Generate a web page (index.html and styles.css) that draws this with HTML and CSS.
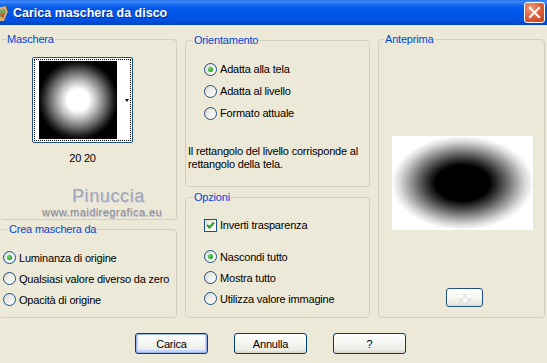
FILE: index.html
```html
<!DOCTYPE html>
<html lang="it">
<head>
<meta charset="utf-8">
<title>Carica maschera da disco</title>
<link rel="stylesheet" href="styles.css">
</head>
<body>
<div class="window">
  <div class="titlebar">
    <svg class="appicon" width="10" height="18" viewBox="0 0 10 18">
      <path d="M-4 3 L6 1 L8 6 L4 16 L-4 16 Z" fill="#d9b27a"/>
      <path d="M-2 5 L5 4 L6 8 L2 12 L-2 12 Z" fill="#7aa35a"/>
      <path d="M0 9 L5 8 L3 14 Z" fill="#c8552f"/>
      <path d="M6 1 L8 6" stroke="#6b4a2a" stroke-width="1"/>
    </svg>
    <span class="title">Carica maschera da disco</span>
    <button class="close" aria-label="Chiudi">
      <svg width="13" height="13" viewBox="0 0 13 13"><path d="M2 2 L11 11 M11 2 L2 11" stroke="#fff" stroke-width="2.2" stroke-linecap="square"/></svg>
    </button>
  </div>

  <div class="main">
    <div class="col col-left">
      <fieldset class="group g-maschera">
        <legend>Maschera</legend>
        <div class="mask-block">
          <div class="combo">
            <div class="combo-focus">
              <div class="mask-thumb"></div>
              <div class="combo-side"><span class="arrow"></span></div>
            </div>
          </div>
          <div class="mask-size">20 20</div>
        </div>
        <div class="watermark">
          <div class="wm-name">Pinuccia</div>
          <div class="wm-url">www.maidiregrafica.eu</div>
        </div>
      </fieldset>
      <fieldset class="group g-crea">
        <legend>Crea maschera da</legend>
        <div class="opt r21"><span class="radio on"></span>Luminanza di origine</div>
        <div class="opt r21"><span class="radio"></span>Qualsiasi valore diverso da zero</div>
        <div class="opt r21"><span class="radio"></span>Opacità di origine</div>
      </fieldset>
    </div>

    <div class="col col-mid">
      <fieldset class="group g-orient">
        <legend>Orientamento</legend>
        <div class="opts">
          <div class="opt r22"><span class="radio on"></span>Adatta alla tela</div>
          <div class="opt r22"><span class="radio"></span>Adatta al livello</div>
          <div class="opt r22"><span class="radio"></span>Formato attuale</div>
        </div>
        <p class="desc">Il rettangolo del livello corrisponde al rettangolo della tela.</p>
      </fieldset>
      <fieldset class="group g-opzioni">
        <legend>Opzioni</legend>
        <div class="opts">
          <div class="opt r22"><span class="check"><svg width="11" height="11" viewBox="0 0 11 11"><path d="M2 5 L4.5 7.5 L9 2.5" fill="none" stroke="#21a121" stroke-width="2"/></svg></span>Inverti trasparenza</div>
          <div class="radios">
            <div class="opt r21"><span class="radio on"></span>Nascondi tutto</div>
            <div class="opt r21"><span class="radio"></span>Mostra tutto</div>
            <div class="opt r21"><span class="radio"></span>Utilizza valore immagine</div>
          </div>
        </div>
      </fieldset>
    </div>

    <div class="col col-right">
      <fieldset class="group g-ante">
        <legend>Anteprima</legend>
        <div class="preview"></div>
        <button class="small-btn" aria-label="Sfondo">
          <span class="checker"></span>
        </button>
      </fieldset>
    </div>
  </div>

  <div class="buttons">
    <button class="btn default">Carica</button>
    <button class="btn">Annulla</button>
    <button class="btn">?</button>
  </div>
</div>
</body>
</html>
```

FILE: styles.css
```css
* { box-sizing: border-box; }

html, body {
  margin: 0;
  padding: 0;
}

body {
  width: 547px;
  height: 363px;
  overflow: hidden;
  background: #ece9d8;
  font-family: "Liberation Sans", Arial, sans-serif;
  font-size: 11px;
  letter-spacing: -0.2px;
  color: #000;
}

.window {
  width: 547px;
  height: 363px;
  display: flex;
  flex-direction: column;
}

/* ---------- title bar ---------- */
.titlebar {
  height: 25px;
  flex: none;
  display: flex;
  align-items: center;
  background: linear-gradient(to bottom,
    #2a73f0 0px, #3d8cfb 2px, #1766ef 5px, #0058ea 9px,
    #0055e6 16px, #0050dc 21px, #0046cc 24px, #0040c0 25px);
}

.appicon {
  flex: none;
  margin-top: 2px;
}

.title {
  margin-left: 3px;
  color: #fff;
  font-weight: bold;
  font-size: 12.5px;
  letter-spacing: 0;
  text-shadow: 1px 1px 0 #0a2a8a;
}

.close {
  margin-left: auto;
  margin-right: 2px;
  width: 21px;
  height: 21px;
  padding: 0;
  border: 1px solid #fff;
  border-radius: 3px;
  background: radial-gradient(circle at 30% 25%, #f09a7c 0%, #e0623f 45%, #c8401c 100%);
  display: flex;
  align-items: center;
  justify-content: center;
}

/* ---------- main ---------- */
.main {
  display: flex;
  gap: 8px;
  padding-top: 8px;
  height: 293px;
  flex: none;
}

.col {
  display: flex;
  flex-direction: column;
}

.col-left { width: 177px; }
.col-mid { width: 185px; }
.col-right { width: 167px; }

.group {
  margin: 0;
  border: 1px solid #d0d0bf;
  border-radius: 4px;
  padding: 0;
  min-width: 0;
}

.group legend {
  color: #0046d5;
  padding: 0 1px;
  margin-left: 5px;
  line-height: 13px;
  height: 13px;
}

.g-maschera {
  height: 188px;
  padding: 11px 0 0 0;
  border-left-color: transparent;
}

.g-crea {
  margin-top: 3px;
  height: 95px;
  padding: 11px 0 0 2px;
  border-left-color: transparent;
}

.g-orient {
  height: 154px;
  padding: 11px 0 0 2px;
  margin-top: 1px;
}

.g-opzioni {
  margin-top: 4px;
  height: 127px;
  padding: 10px 0 0 2px;
}

.g-ante {
  height: 285px;
  padding: 0;
}

/* options */
.opts { margin-left: 16px; }

.opt {
  display: flex;
  align-items: center;
  gap: 3px;
  white-space: nowrap;
}

.r21 { height: 21px; }
.r22 { height: 22px; }

.radios { margin-top: 10px; }

.radio {
  flex: none;
  width: 13px;
  height: 13px;
  border: 1px solid #1c5180;
  border-radius: 50%;
  background: linear-gradient(135deg, #d8d8d0 0%, #eeeeea 45%, #ffffff 100%);
  display: inline-flex;
  align-items: center;
  justify-content: center;
}

.radio.on::after {
  content: "";
  width: 5px;
  height: 5px;
  border-radius: 50%;
  background: radial-gradient(circle at 35% 35%, #6ee06e 0%, #21a121 70%, #1a8a1a 100%);
}

.check {
  flex: none;
  width: 13px;
  height: 13px;
  border: 1px solid #1c5180;
  background: linear-gradient(135deg, #dcdcd6 0%, #f4f4f0 50%, #ffffff 100%);
  display: inline-flex;
  align-items: center;
  justify-content: center;
}

.desc {
  margin: 21px 0 0 0;
  line-height: 13px;
  width: 178px;
}

/* mask combo */
.mask-block {
  margin-left: 31px;
  width: 101px;
  display: flex;
  flex-direction: column;
  align-items: center;
}

.combo {
  width: 101px;
  height: 86px;
  border: 1px solid #1c5180;
  border-radius: 2px;
  background: #fff;
  padding: 1px;
}

.combo-focus {
  width: 100%;
  height: 100%;
  border: 1px dotted #000;
  display: flex;
  padding: 1px 0 1px 4px;
}

.mask-thumb {
  width: 78px;
  height: 78px;
  background: radial-gradient(circle at 50% 50%, #ffffff 0px, #ffffff 11px, #bdbdbd 19px, #6a6a6a 28px, #1c1c1c 36px, #000 40px);
}

.combo-side {
  flex: 1;
  display: flex;
  align-items: center;
  justify-content: flex-end;
  padding-right: 1px;
}

.arrow {
  width: 0;
  height: 0;
  border-left: 2.5px solid transparent;
  border-right: 2.5px solid transparent;
  border-top: 3px solid #000;
}

.mask-size {
  margin-top: 9px;
  line-height: 13px;
}

/* watermark */
.watermark {
  margin-top: 22px;
  white-space: nowrap;
}

.wm-name {
  margin-left: 71px;
  font-size: 18px;
  line-height: 18px;
  letter-spacing: 0.6px;
  color: #a0a4b6;
  text-shadow: 1px 1px 0 #d6d6de;
}

.wm-url {
  margin-left: 41px;
  margin-top: 1px;
  font-size: 11px;
  line-height: 13px;
  letter-spacing: 0.45px;
  color: #8e8e9a;
  text-shadow: 0.5px 0.5px 0 #b8b8c2;
}

/* preview */
.preview {
  margin: 90px 0 0 13px;
  width: 141px;
  height: 94px;
  background: radial-gradient(ellipse 71px 47px at 50% 50%, #000 0%, #000 38%, #3a3a3a 52%, #8a8a8a 70%, #d8d8d8 88%, #fff 100%);
}

.small-btn {
  display: flex;
  align-items: center;
  justify-content: center;
  margin: 58px 0 0 67px;
  width: 37px;
  height: 19px;
  padding: 0;
  border: 1px solid #1c5180;
  border-radius: 3px;
  background: linear-gradient(to bottom, #ffffff 0%, #f4f4f0 60%, #e0e0d8 100%);
}

.checker {
  width: 12px;
  height: 8px;
  background:
    repeating-conic-gradient(#e4e4e4 0 25%, #fbfbfb 0 50%) 0 0 / 8px 8px;
  opacity: 0.9;
}

/* buttons */
.buttons {
  display: flex;
  gap: 26px;
  padding: 15px 0 0 135px;
}

.btn {
  width: 73px;
  height: 21px;
  padding: 0;
  font-family: "Liberation Sans", Arial, sans-serif;
  font-size: 11px;
  letter-spacing: -0.2px;
  color: #000;
  border: 1px solid #003c74;
  border-radius: 3px;
  background: linear-gradient(to bottom, #ffffff 0%, #f7f7f4 40%, #ecebe6 85%, #d6d0c5 100%);
}

.btn.default {
  box-shadow: inset 0 0 0 1px #9cb6f2, inset 0 -1px 0 2px #c2d4fa;
}
```
